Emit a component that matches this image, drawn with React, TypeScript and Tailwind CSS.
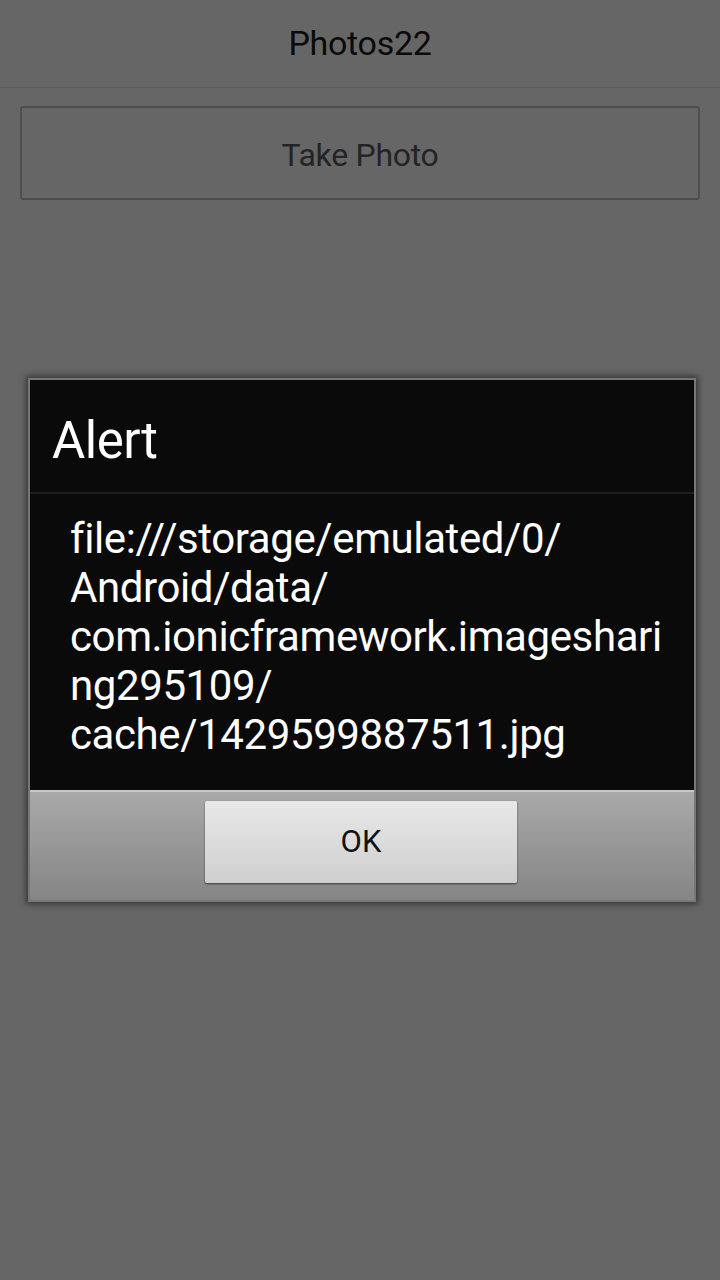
const lines = [
    'file:///storage/emulated/0/',
    'Android/data/',
    'com.ionicframework.imageshari',
    'ng295109/',
    'cache/1429599887511.jpg',
]

export default function App() {
    return (
        <div className="w-[720px] h-[1280px] bg-[#666666] flex flex-col font-['Roboto',sans-serif]">
            <div className="h-[88px] border-b border-[#5a5a5a] flex items-center justify-center">
                <h1 className="text-[34px] tracking-[-0.3px] text-[#0a0a0a] pb-[1px]">Photos22</h1>
            </div>
            <div className="px-[20px] pt-[18px]">
                <button className="w-full h-[94px] rounded-[3px] border-2 border-[#4f4f4f] text-[32px] tracking-[-0.3px] text-[#242424] pt-[4px]">
                    Take Photo
                </button>
            </div>

            <div className="mt-[178px] ml-[28px] mr-[24px] border-2 border-[#777777] shadow-[0_0_6px_2px_rgba(40,40,40,0.8)] flex flex-col">
                <div className="bg-[#0a0a0a]">
                    <div className="h-[114px] flex items-center px-[22px] border-b-2 border-[#1f1f1f]">
                        <h2 className="text-[51px] tracking-[-0.5px] text-white pt-[10px]">Alert</h2>
                    </div>
                    <div className="pl-[40px] pr-[16px] pt-[20px] pb-[31px] text-[42px] tracking-[-0.4px] leading-[49px] text-white">
                        {lines.map((l) => (
                            <div key={l}>{l}</div>
                        ))}
                    </div>
                </div>
                <div className="h-[110px] border-t-2 border-[#c8c8c8] bg-gradient-to-b from-[#a9a9a9] to-[#858585] flex justify-center pt-[9px]">
                    <button className="w-[312px] h-[82px] -translate-x-[1px] rounded-[2px] bg-gradient-to-b from-[#e8e8e8] to-[#cfcfcf] shadow-[0_1px_2px_rgba(0,0,0,0.6)] text-[31px] text-[#111111]">
                        OK
                    </button>
                </div>
            </div>
        </div>
    )
}
